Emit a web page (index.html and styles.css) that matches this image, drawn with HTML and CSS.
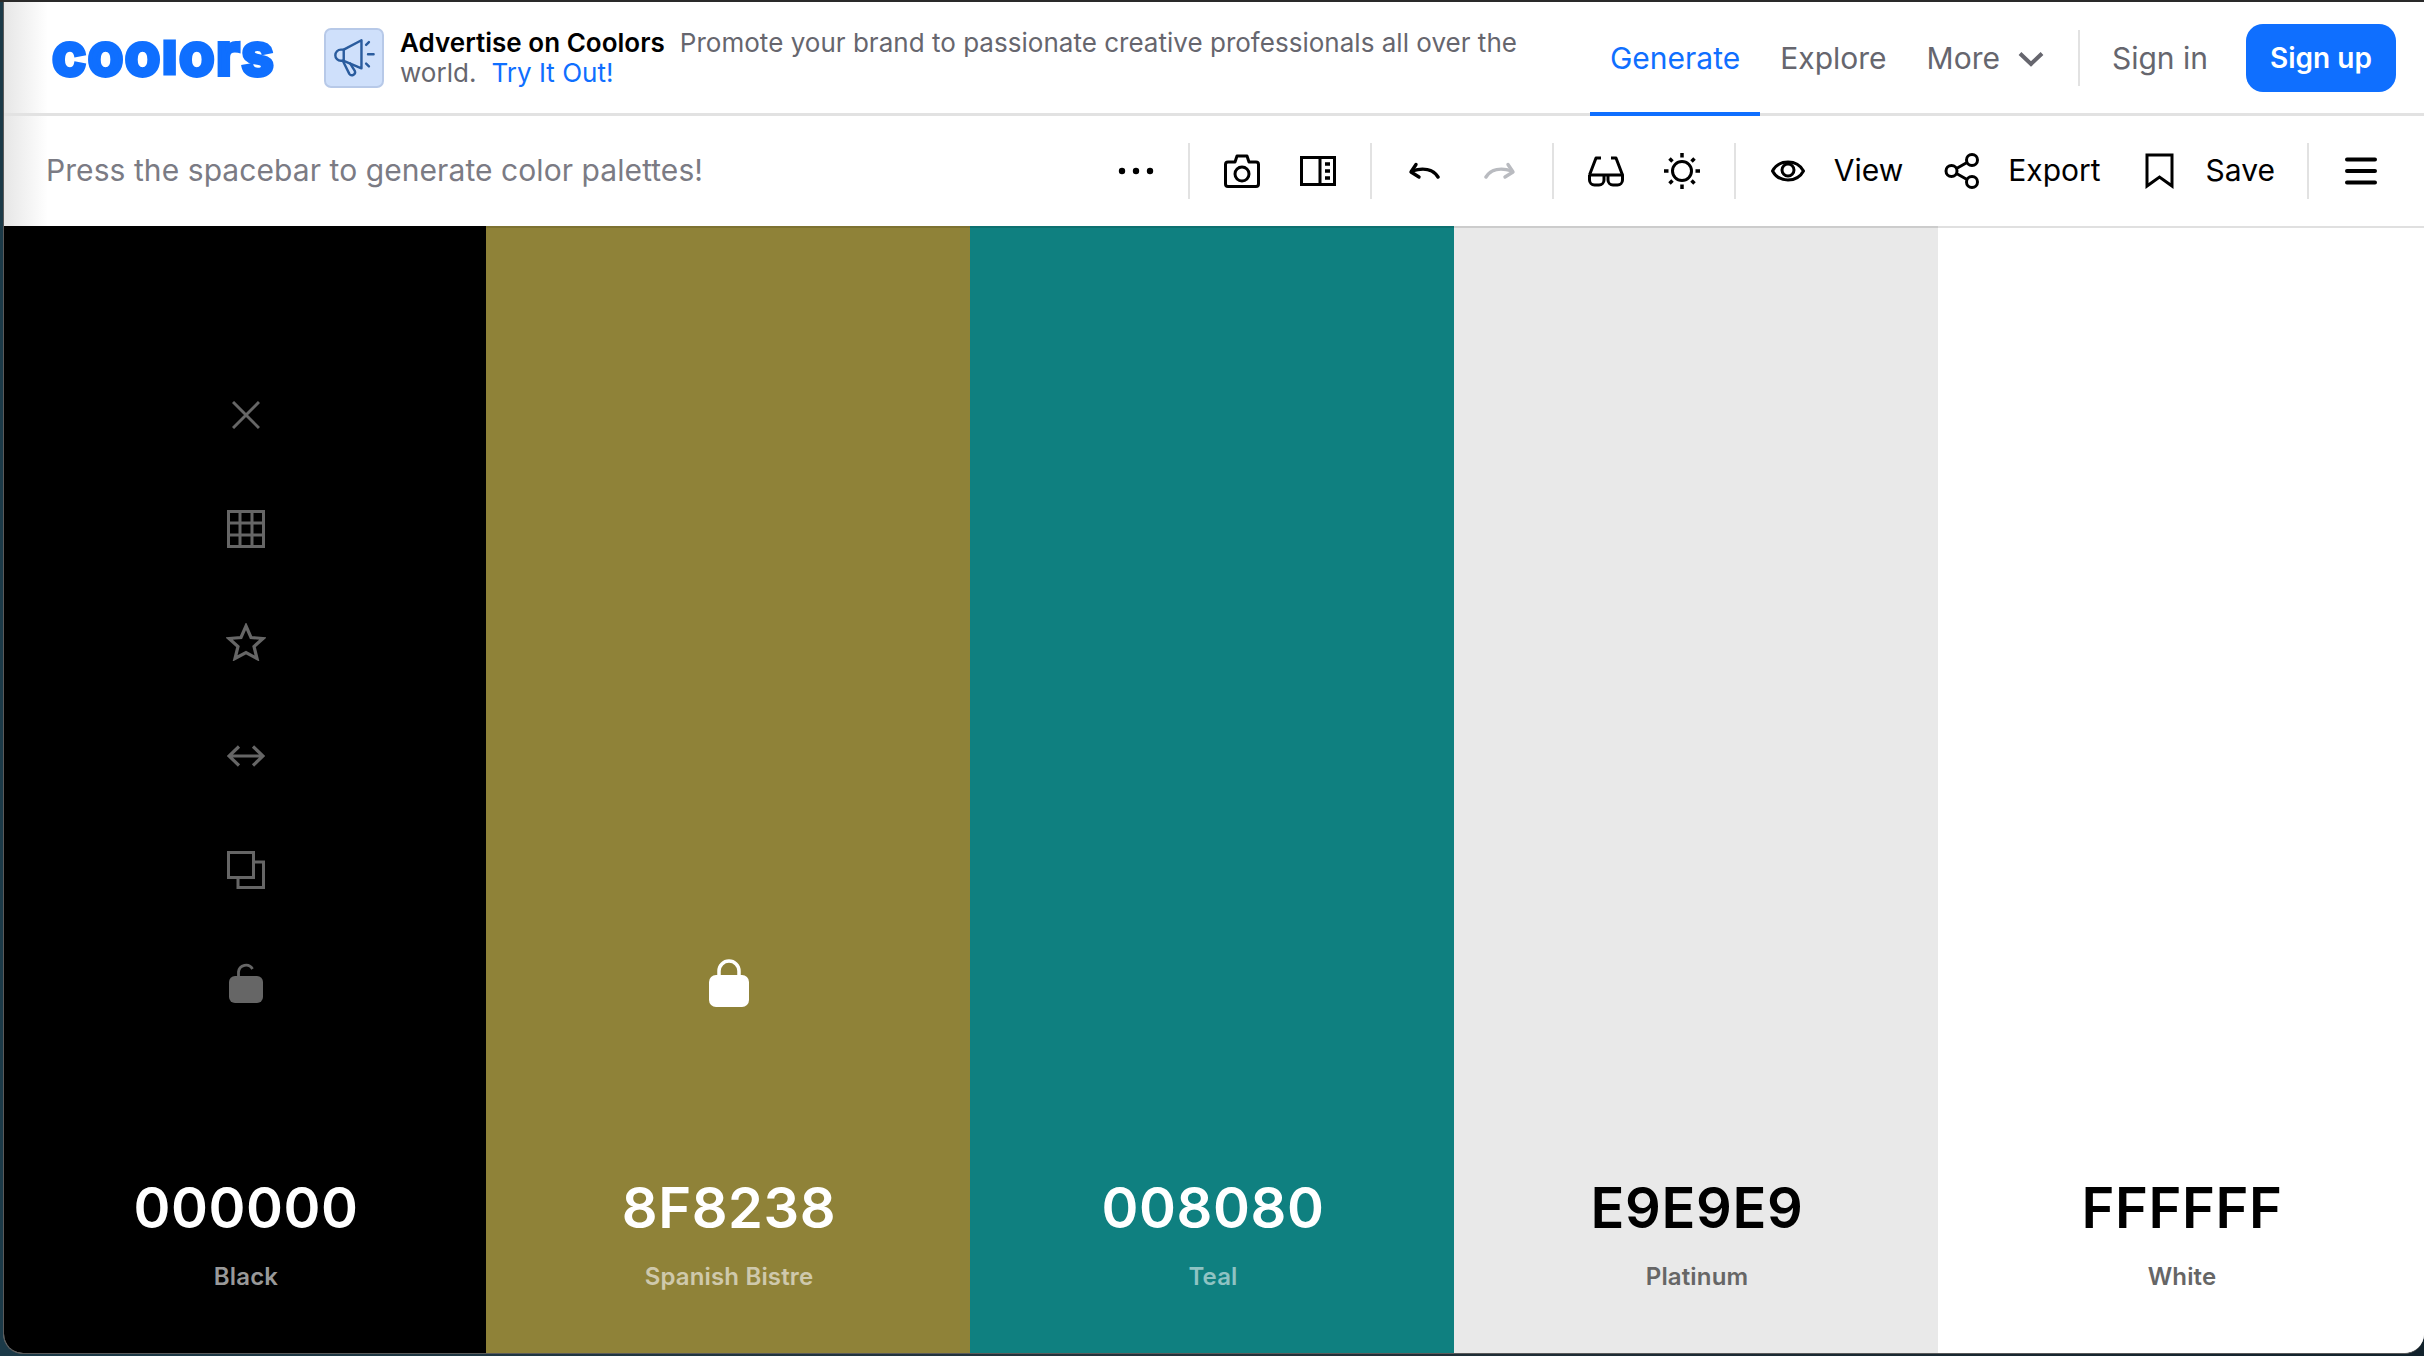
FILE: index.html
```html
<!DOCTYPE html>
<html lang="en">
<head>
    <meta charset="UTF-8">
    <title>Coolors - Generate</title>
    <link rel="stylesheet" href="styles.css">
</head>
<body>
    <div class="window">
        <header class="navbar">
            <div class="logo"><span>coo</span><span class="logo-l">l</span><span>ors</span></div>
            <div class="ad-icon">
                <svg width="56" height="56" viewBox="0 0 60 60" fill="none" stroke="#2a5c9e" stroke-width="2.6" stroke-linecap="round" stroke-linejoin="round">
                    <path d="M38 11V41L19 33H16a6 6 0 0 1 0-12H19Z"/>
                    <path d="M19 21V33"/>
                    <path d="M18 33L25 47a3.4 3.4 0 0 0 6-3L26 36"/>
                    <path d="M46 13L43 16M45 26H51M43 36L46 39"/>
                </svg>
            </div>
            <p class="ad-text"><strong>Advertise on Coolors</strong><span class="ad-desc">Promote your brand to passionate creative professionals all over the world.</span><a class="ad-link">Try It Out!</a></p>
            <nav class="nav-links">
                <a class="nav-link active">Generate</a>
                <a class="nav-link">Explore</a>
                <a class="nav-link">More
                    <svg class="chevron" width="26" height="16" viewBox="0 0 26 16" fill="none" stroke="#66666e" stroke-width="4"><path d="M2 2.5L13 13L24 2.5"/></svg>
                </a>
                <span class="nav-divider"></span>
                <a class="nav-link sign-in">Sign in</a>
                <button class="signup-button">Sign up</button>
            </nav>
        </header>

        <div class="toolbar">
            <div class="hint">Press the spacebar to generate color palettes!</div>
            <div class="tools">
                <button class="tool">
                    <svg width="36" height="8" viewBox="0 0 36 8" fill="#000"><circle cx="4" cy="4" r="3.2"/><circle cx="18" cy="4" r="3.2"/><circle cx="32" cy="4" r="3.2"/></svg>
                </button>
                <span class="tool-divider"></span>
                <button class="tool">
                    <svg width="36" height="34" viewBox="0 0 36 34" fill="none" stroke="#000" stroke-width="3" stroke-linejoin="round">
                        <path d="M4 8H11L13 2H23L25 8H32a2.500 2.500 0 0 1 2.500 2.500V30a2.500 2.500 0 0 1-2.500 2.500H4A2.500 2.500 0 0 1 1.500 30V10.500A2.500 2.500 0 0 1 4 8Z"/>
                        <circle cx="18" cy="20" r="7"/>
                    </svg>
                </button>
                <button class="tool">
                    <svg width="36" height="30" viewBox="0 0 36 30" fill="none" stroke="#000" stroke-width="3">
                        <rect x="1.500" y="1.500" width="33" height="27"/>
                        <path d="M20 1.500V28.500"/>
                        <path d="M25 8H30M25 15H30M25 22H30" stroke-width="3.500"/>
                    </svg>
                </button>
                <span class="tool-divider"></span>
                <button class="tool">
                    <svg width="32" height="18" viewBox="0 0 32 18" fill="none" stroke="#000" stroke-width="3.400" stroke-linecap="round" stroke-linejoin="round">
                        <path d="M30 15C25 7 15 5.500 4 9"/><path d="M8 2.500L3 10L11 15"/>
                    </svg>
                </button>
                <button class="tool">
                    <svg width="32" height="18" viewBox="0 0 32 18" fill="none" stroke="#b9bbc0" stroke-width="3.400" stroke-linecap="round" stroke-linejoin="round">
                        <path d="M2 15C7 7 17 5.500 28 9"/><path d="M24 2.500L29 10L21 15"/>
                    </svg>
                </button>
                <span class="tool-divider"></span>
                <button class="tool">
                    <svg width="38" height="31" viewBox="0 0 38 31" fill="none" stroke="#000" stroke-width="3" stroke-linejoin="round">
                        <path d="M14 2H9L2.500 19M24 2H29L35.500 19"/>
                        <path d="M2.500 19H35.500V24a5 5 0 0 1-5 5H26a5 5 0 0 1-5-5V19M17 19V24a5 5 0 0 1-5 5H7.500a5 5 0 0 1-5-5V19"/>
                    </svg>
                </button>
                <button class="tool">
                    <svg width="36" height="36" viewBox="0 0 36 36" fill="none" stroke="#000" stroke-width="3">
                        <circle cx="18" cy="18" r="9.500"/>
                        <path d="M18 0V4.500M18 31.500V36M0 18H4.500M31.500 18H36M5.500 5.500L8.500 8.500M27.500 27.500L30.500 30.500M30.500 5.500L27.500 8.500M8.500 27.500L5.500 30.500" stroke-width="3.500"/>
                    </svg>
                </button>
                <span class="tool-divider"></span>
                <button class="tool">
                    <svg width="34" height="24" viewBox="0 0 34 24" fill="none" stroke="#000" stroke-width="3" stroke-linejoin="round">
                        <path d="M1.500 12C8 0 26 0 32.500 12C26 24 8 24 1.500 12Z"/>
                        <circle cx="17" cy="11" r="6"/>
                    </svg>
                </button>
                <span class="tool-text">View</span>
                <button class="tool">
                    <svg width="36" height="36" viewBox="0 0 36 36" fill="none" stroke="#000" stroke-width="3">
                        <circle cx="7.500" cy="18" r="5.500"/><circle cx="28" cy="7" r="5.500"/><circle cx="28" cy="29" r="5.500"/>
                        <path d="M12.500 15.500L23 9.500M12.500 20.500L23 26.500"/>
                    </svg>
                </button>
                <span class="tool-text">Export</span>
                <button class="tool">
                    <svg width="31" height="36" viewBox="0 0 31 36" fill="none" stroke="#000" stroke-width="3">
                        <path d="M3 2H28V33L15.500 24L3 33Z"/>
                    </svg>
                </button>
                <span class="tool-text save-text">Save</span>
                <span class="tool-divider"></span>
                <button class="tool">
                    <svg width="32" height="28" viewBox="0 0 32 28" fill="none" stroke="#000" stroke-width="4" stroke-linecap="round">
                        <path d="M2 2.500H30M2 14H30M2 25.500H30"/>
                    </svg>
                </button>
            </div>
        </div>

        <main class="palette">
            <section class="swatch swatch-black">
                <div class="options">
                    <button class="option">
                        <svg width="28" height="28" viewBox="0 0 28 28" stroke="#666" stroke-width="3"><path d="M1 1L27 27M27 1L1 27"/></svg>
                    </button>
                    <button class="option">
                        <svg width="38" height="38" viewBox="0 0 38 38" fill="none" stroke="#666" stroke-width="3">
                            <rect x="1.500" y="1.500" width="35" height="35"/>
                            <path d="M13 1V37M25 1V37M1 13H37M1 25H37"/>
                        </svg>
                    </button>
                    <button class="option">
                        <svg width="40" height="38" viewBox="0 0 40 38" fill="none" stroke="#666" stroke-width="3.200" stroke-linejoin="miter">
                            <path d="M20 3L25 14.500L37 15.500L28 23.500L31 35.500L20 29.500L9 35.500L12 23.500L3 15.500L15 14.500Z"/>
                        </svg>
                    </button>
                    <button class="option">
                        <svg width="38" height="22" viewBox="0 0 38 22" fill="none" stroke="#666" stroke-width="3.200">
                            <path d="M2 11H36M12 1.500L2 11L12 20.500M26 1.500L36 11L26 20.500"/>
                        </svg>
                    </button>
                    <button class="option">
                        <svg width="38" height="38" viewBox="0 0 38 38" fill="none" stroke="#666" stroke-width="3">
                            <rect x="1.500" y="1.500" width="25" height="25"/>
                            <path d="M27 11H36.500V36.500H11V27"/>
                        </svg>
                    </button>
                    <button class="option">
                        <svg width="34" height="40" viewBox="0 0 34 40" fill="#666">
                            <path d="M9.500 15V9a7.500 7.500 0 0 1 14-3" fill="none" stroke="#666" stroke-width="2.800"/>
                            <rect y="13" width="34" height="27" rx="6"/>
                        </svg>
                    </button>
                </div>
                <div class="hex">000000</div>
                <div class="color-name">Black</div>
            </section>
            <section class="swatch swatch-bistre">
                <div class="options">
                    <button class="option">
                        <svg width="40" height="48" viewBox="0 0 40 48" fill="#fff">
                            <path d="M10 18V12a10 10 0 0 1 20 0V18" fill="none" stroke="#fff" stroke-width="3.500"/>
                            <rect y="16" width="40" height="32" rx="7"/>
                        </svg>
                    </button>
                </div>
                <div class="hex">8F8238</div>
                <div class="color-name">Spanish Bistre</div>
            </section>
            <section class="swatch swatch-teal">
                <div class="hex">008080</div>
                <div class="color-name">Teal</div>
            </section>
            <section class="swatch swatch-platinum">
                <div class="hex">E9E9E9</div>
                <div class="color-name">Platinum</div>
            </section>
            <section class="swatch swatch-white">
                <div class="hex">FFFFFF</div>
                <div class="color-name">White</div>
            </section>
        </main>
    </div>
</body>
</html>
```

FILE: styles.css
```css
* {
    margin: 0;
    padding: 0;
    box-sizing: border-box;
    font-family: Inter, 'Liberation Sans', sans-serif;
}

:root {
    --blue: #0f6fff;
    --text-grey: #66666e;
    --line: #e2e2e2;
}

html, body {
    height: 100%;
    overflow: hidden;
}

body {
    background: linear-gradient(90deg, #1c3a48, #23313a 50%, #12222c);
    border-top: 2px solid #2a2a2a;
}

button {
    background: transparent;
    border: none;
    cursor: pointer;
}

.window {
    display: flex;
    flex-direction: column;
    height: 1352px;
    margin-left: 3px;
    border-left: 1px solid #5a5a5a;
    border-bottom: 1px solid #5a5a5a;
    border-radius: 0 0 20px 20px;
    overflow: hidden;
    background: #fff;
}

/* top bar */
.navbar {
    display: flex;
    align-items: center;
    height: 114px;
    flex-shrink: 0;
    padding: 0 28px 0 48px;
    border-bottom: 3px solid var(--line);
    background: linear-gradient(90deg, #e6e6e6, #fff 44px);
}

.logo {
    display: flex;
    align-items: baseline;
    width: 220px;
    height: 60px;
    margin-top: -5px;
    font-size: 58px;
    line-height: 58px;
    font-weight: 700;
    letter-spacing: 1.5px;
    color: var(--blue);
    -webkit-text-stroke: 4px var(--blue);
}

.logo-l {
    display: inline-block;
    transform: scaleY(0.78);
    transform-origin: 50% 78%;
}

.ad-icon {
    display: flex;
    align-items: center;
    justify-content: center;
    width: 60px;
    height: 60px;
    margin-left: 52px;
    flex-shrink: 0;
    background: #cfe0fb;
    border: 2px solid #b7c9e8;
    border-radius: 7px;
}

.ad-text {
    width: 1130px;
    margin-left: 16px;
    font-size: 26px;
    line-height: 30px;
    letter-spacing: 0.02px;
    color: var(--text-grey);
}

.ad-text strong {
    font-weight: 600;
    color: #000;
}

.ad-desc {
    margin-left: 15px;
}

.ad-link {
    margin-left: 15px;
    color: var(--blue);
}

.nav-links {
    display: flex;
    align-items: center;
    height: 100%;
    margin-left: auto;
}

.nav-link {
    display: flex;
    align-items: center;
    height: 100%;
    padding: 0 20px;
    font-size: 30px;
    color: var(--text-grey);
}

.nav-link.active {
    color: var(--blue);
    border-bottom: 4px solid var(--blue);
    margin-bottom: -3px;
    height: calc(100% + 3px);
    padding-top: 1px;
}

.chevron {
    margin-left: 18px;
    margin-top: 3px;
}

.nav-divider {
    width: 2px;
    height: 56px;
    margin: 0 12px 0 14px;
    background: var(--line);
}

.sign-in {
    margin-right: 18px;
}

.signup-button {
    width: 150px;
    height: 68px;
    border-radius: 17px;
    background: var(--blue);
    color: #fff;
    font-size: 28px;
    font-weight: 600;
}

/* second bar */
.toolbar {
    display: flex;
    align-items: center;
    justify-content: space-between;
    height: 110px;
    flex-shrink: 0;
    padding: 0 25px 0 42px;
    background: linear-gradient(90deg, #e6e6e6, #fff 44px);
}

.hint {
    padding-bottom: 3px;
    font-size: 30px;
    letter-spacing: 0.07px;
    color: #7b7b84;
}

.tools {
    display: flex;
    align-items: center;
}

.tool {
    display: flex;
    align-items: center;
    justify-content: center;
    width: 76px;
    height: 60px;
}

.tool-divider {
    width: 2px;
    height: 56px;
    margin: 0 14px;
    background: var(--line);
}

.tool-text {
    margin: 0 21px 3px 8px;
    font-size: 30px;
    font-weight: 400;
    color: #000;
}

.save-text {
    margin-right: 18px;
}

/* colour columns */
.palette {
    display: grid;
    grid-template-columns: 482px 484px 484px 484px 1fr;
    flex: 1;
}

.swatch {
    display: flex;
    flex-direction: column;
    align-items: center;
    justify-content: flex-end;
    padding: 0 0 61.500px 2px;
    border-top: 2px solid rgba(0, 0, 0, 0.12);
    color: #000;
}

.swatch-black { background: #000; color: #fff; }
.swatch-bistre { background: #8f8238; color: #fff; }
.swatch-teal { background: #0f8080; color: #fff; }
.swatch-platinum { background: #e9e9e9; }
.swatch-white { background: #fff; }

.options {
    display: flex;
    flex-direction: column;
    margin-bottom: 133px;
}

.option {
    display: flex;
    align-items: center;
    justify-content: center;
    width: 80px;
    height: 113.600px;
}

.hex {
    font-size: 56px;
    line-height: 70px;
    font-weight: 600;
    letter-spacing: 0.600px;
}

.color-name {
    margin-top: 18.500px;
    font-size: 24px;
    line-height: 30px;
    font-weight: 600;
    letter-spacing: 0.150px;
    color: #666;
}

.swatch-black .color-name { color: #999; }
.swatch-bistre .color-name { color: #cfc9ac; }
.swatch-teal .color-name { color: #8fc3c3; }
```
